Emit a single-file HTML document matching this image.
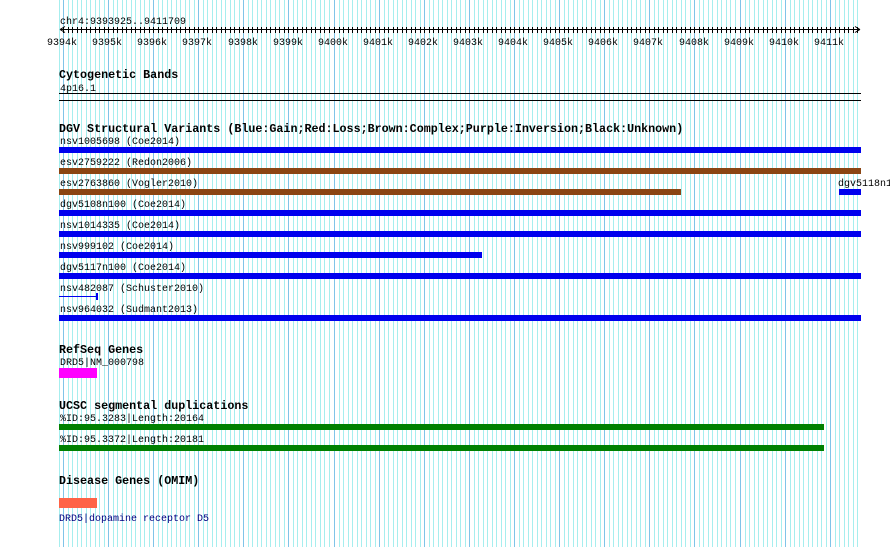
<!DOCTYPE html>
<html><head><meta charset="utf-8"><style>
html,body{margin:0;padding:0;background:#fff;width:890px;height:547px;overflow:hidden}
svg{display:block}
text{font-family:"Liberation Mono","DejaVu Sans Mono",monospace;font-size:10px;fill:#000}
.t{font-weight:bold;font-size:11.7px}
</style></head><body>
<svg width="890" height="547" viewBox="0 0 890 547" xmlns="http://www.w3.org/2000/svg">
<defs>
<g id="blk">
<rect x="5" y="0" width="1" height="547" fill="#a6eeee"/>
<rect x="9" y="0" width="1" height="547" fill="#a6eeee"/>
<rect x="14" y="0" width="1" height="547" fill="#a6eeee"/>
<rect x="18" y="0" width="1" height="547" fill="#a6eeee"/>
<rect x="23" y="0" width="1" height="547" fill="#a6eeee"/>
<rect x="27" y="0" width="1" height="547" fill="#a6eeee"/>
<rect x="32" y="0" width="1" height="547" fill="#a6eeee"/>
<rect x="36" y="0" width="1" height="547" fill="#a6eeee"/>
<rect x="41" y="0" width="1" height="547" fill="#a6eeee"/>
<rect x="0" y="0" width="1" height="547" fill="#80c4e8"/>
<rect x="0" y="27" width="1" height="6" fill="#000"/>
<rect x="5" y="27" width="1" height="6" fill="#000"/>
<rect x="9" y="27" width="1" height="6" fill="#000"/>
<rect x="14" y="27" width="1" height="6" fill="#000"/>
<rect x="18" y="27" width="1" height="6" fill="#000"/>
<rect x="23" y="27" width="1" height="6" fill="#000"/>
<rect x="27" y="27" width="1" height="6" fill="#000"/>
<rect x="32" y="27" width="1" height="6" fill="#000"/>
<rect x="36" y="27" width="1" height="6" fill="#000"/>
<rect x="41" y="27" width="1" height="6" fill="#000"/>
</g>
<clipPath id="cp"><rect x="55" y="0" width="806" height="547"/></clipPath>
</defs>
<rect x="59" y="0" width="1" height="547" fill="#a6eeee"/>
<g clip-path="url(#cp)" shape-rendering="crispEdges">
<use href="#blk" x="63"/><use href="#blk" x="108"/><use href="#blk" x="153"/><use href="#blk" x="198"/>
<use href="#blk" x="243"/><use href="#blk" x="288"/><use href="#blk" x="334"/><use href="#blk" x="379"/>
<use href="#blk" x="424"/><use href="#blk" x="469"/><use href="#blk" x="514"/><use href="#blk" x="559"/>
<use href="#blk" x="604"/><use href="#blk" x="649"/><use href="#blk" x="694"/><use href="#blk" x="740"/>
<use href="#blk" x="785"/><use href="#blk" x="830"/>
</g>

<text x="60" y="24">chr4:9393925..9411709</text>
<rect x="61" y="29" width="799" height="1" fill="#000"/>
<path d="M60 29.5 L65 26.5 M60 29.5 L65 32.5 M860 29.5 L855 26.5 M860 29.5 L855 32.5" stroke="#000" stroke-width="1" fill="none"/>
<g>
<text x="47" y="45">9394k</text>
<text x="92" y="45">9395k</text>
<text x="137" y="45">9396k</text>
<text x="182" y="45">9397k</text>
<text x="228" y="45">9398k</text>
<text x="273" y="45">9399k</text>
<text x="318" y="45">9400k</text>
<text x="363" y="45">9401k</text>
<text x="408" y="45">9402k</text>
<text x="453" y="45">9403k</text>
<text x="498" y="45">9404k</text>
<text x="543" y="45">9405k</text>
<text x="588" y="45">9406k</text>
<text x="633" y="45">9407k</text>
<text x="679" y="45">9408k</text>
<text x="724" y="45">9409k</text>
<text x="769" y="45">9410k</text>
<text x="814" y="45">9411k</text>
</g>

<text class="t" x="59" y="78">Cytogenetic Bands</text>
<text x="60" y="91">4p16.1</text>
<rect x="59" y="93" width="802" height="1" fill="#000"/>
<rect x="59" y="100" width="802" height="1" fill="#000"/>

<text class="t" x="59" y="132">DGV Structural Variants (Blue:Gain;Red:Loss;Brown:Complex;Purple:Inversion;Black:Unknown)</text>
<text x="60" y="144">nsv1005698 (Coe2014)</text>
<rect x="59" y="147" width="802" height="6" fill="#0000ee"/>
<text x="60" y="165">esv2759222 (Redon2006)</text>
<rect x="59" y="168" width="802" height="6" fill="#8b4513"/>
<text x="60" y="186">esv2763860 (Vogler2010)</text>
<text x="838" y="186">dgv5118n1</text>
<rect x="59" y="189" width="622" height="6" fill="#8b4513"/>
<rect x="839" y="189" width="22" height="6" fill="#0000ee"/>
<text x="60" y="207">dgv5108n100 (Coe2014)</text>
<rect x="59" y="210" width="802" height="6" fill="#0000ee"/>
<text x="60" y="228">nsv1014335 (Coe2014)</text>
<rect x="59" y="231" width="802" height="6" fill="#0000ee"/>
<text x="60" y="249">nsv999102 (Coe2014)</text>
<rect x="59" y="252" width="423" height="6" fill="#0000ee"/>
<text x="60" y="270">dgv5117n100 (Coe2014)</text>
<rect x="59" y="273" width="802" height="6" fill="#0000ee"/>
<text x="60" y="291">nsv482087 (Schuster2010)</text>
<rect x="59" y="296" width="38" height="1" fill="#0000ee"/>
<rect x="96" y="293" width="2" height="7" fill="#0000ee"/>
<text x="60" y="312">nsv964032 (Sudmant2013)</text>
<rect x="59" y="315" width="802" height="6" fill="#0000ee"/>

<text class="t" x="59" y="353">RefSeq Genes</text>
<text x="60" y="365">DRD5|NM_000798</text>
<rect x="59" y="368" width="38" height="10" fill="#ff00ff"/>

<text class="t" x="59" y="409">UCSC segmental duplications</text>
<text x="60" y="421">%ID:95.3283|Length:20164</text>
<rect x="59" y="424" width="765" height="6" fill="#008000"/>
<text x="60" y="442">%ID:95.3372|Length:20181</text>
<rect x="59" y="445" width="765" height="6" fill="#008000"/>

<text class="t" x="59" y="484">Disease Genes (OMIM)</text>
<rect x="59" y="498" width="38" height="10" fill="#ff6347"/>
<text x="59" y="521" style="fill:#000080">DRD5|dopamine receptor D5</text>
</svg>
</body></html>
